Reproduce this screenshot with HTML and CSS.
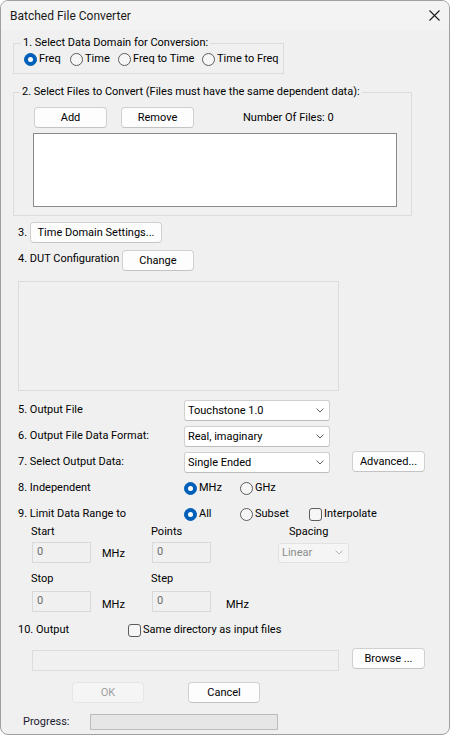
FILE: index.html
```html
<!DOCTYPE html>
<html>
<head>
<meta charset="utf-8">
<link rel="stylesheet" href="styles.css">
</head>
<body>
<div class="window">
  <div class="titlebar">
    <span class="title">Batched File Converter</span>
    <svg class="close" width="11" height="11" viewBox="0 0 11 11"><path d="M0.5 0.5 L10.5 10.5 M10.5 0.5 L0.5 10.5" stroke="#1a1a1a" stroke-width="1.1" fill="none"/></svg>
  </div>
  <div class="body">
    <fieldset class="group g1">
      <legend>1. Select Data Domain for Conversion:</legend>
      <div class="radios">
        <div class="opt o-freq"><span class="radio on"></span>Freq</div>
        <div class="opt o-time"><span class="radio"></span>Time</div>
        <div class="opt o-ftt"><span class="radio"></span>Freq to Time</div>
        <div class="opt"><span class="radio"></span>Time to Freq</div>
      </div>
    </fieldset>

    <fieldset class="group g2">
      <legend>2. Select Files to Convert (Files must have the same dependent data):</legend>
      <div class="filebar">
        <div class="btn">Add</div>
        <div class="btn btn-remove">Remove</div>
        <span class="count">Number Of Files: 0</span>
      </div>
      <div class="listbox"></div>
    </fieldset>

    <div class="row r3">
      <span class="num">3.</span>
      <div class="btn btn-tds">Time Domain Settings...</div>
    </div>

    <div class="row r4">
      <span class="dut-lbl">4. DUT Configuration</span>
      <div class="btn btn-change">Change</div>
    </div>

    <div class="dutbox"></div>

    <div class="row crow r5">
      <span class="lbl">5. Output File</span>
      <div class="combo"><span>Touchstone 1.0</span><svg class="chev" width="8" height="5" viewBox="0 0 8 5"><path d="M0.5 0.5 L4 4 L7.5 0.5" stroke="#606060" fill="none"/></svg></div>
    </div>
    <div class="row crow r6">
      <span class="lbl">6. Output File Data Format:</span>
      <div class="combo"><span>Real, imaginary</span><svg class="chev" width="8" height="5" viewBox="0 0 8 5"><path d="M0.5 0.5 L4 4 L7.5 0.5" stroke="#606060" fill="none"/></svg></div>
    </div>
    <div class="row crow r7">
      <span class="lbl">7. Select Output Data:</span>
      <div class="combo"><span>Single Ended</span><svg class="chev" width="8" height="5" viewBox="0 0 8 5"><path d="M0.5 0.5 L4 4 L7.5 0.5" stroke="#606060" fill="none"/></svg></div>
      <div class="btn btn-adv">Advanced...</div>
    </div>

    <div class="row r8">
      <span class="lbl">8. Independent</span>
      <div class="opt o-mhz"><span class="radio on"></span>MHz</div>
      <div class="opt"><span class="radio"></span>GHz</div>
    </div>

    <div class="row r9">
      <span class="lbl">9. Limit Data Range to</span>
      <div class="opt o-mhz"><span class="radio on"></span>All</div>
      <div class="opt o-subset"><span class="radio"></span>Subset</div>
      <div class="opt"><span class="check"></span>Interpolate</div>
    </div>

    <div class="sub r10">
      <span class="c-start">Start</span>
      <span class="c-points">Points</span>
      <span>Spacing</span>
    </div>
    <div class="sub inputs r11">
      <div class="field">0</div>
      <span class="unit u1">MHz</span>
      <div class="field">0</div>
      <div class="combo dis"><span>Linear</span><svg class="chev" width="8" height="5" viewBox="0 0 8 5"><path d="M0.5 0.5 L4 4 L7.5 0.5" stroke="#b5b5b5" fill="none"/></svg></div>
    </div>
    <div class="sub r12">
      <span class="c-start">Stop</span>
      <span>Step</span>
    </div>
    <div class="sub inputs r13">
      <div class="field">0</div>
      <span class="unit low">MHz</span>
      <div class="field">0</div>
      <span class="unit low u2">MHz</span>
    </div>

    <div class="row r14">
      <span class="out-lbl">10. Output</span>
      <div class="opt"><span class="check"></span>Same directory as input files</div>
    </div>

    <div class="row r15">
      <div class="pathbox"></div>
      <div class="btn btn-browse">Browse ...</div>
    </div>

    <div class="row r16">
      <div class="btn btn-ok">OK</div>
      <div class="btn btn-cancel">Cancel</div>
    </div>

    <div class="row r17">
      <span class="prog-lbl">Progress:</span>
      <div class="progress"></div>
    </div>
  </div>
</div>
</body>
</html>
```
FILE: styles.css
```css
* { box-sizing: border-box; }
html, body { margin: 0; padding: 0; background: #ffffff; }
body {
  font-family: Roboto, "Liberation Sans", sans-serif;
  font-size: 11px;
  line-height: 16px;
  color: #000;
}
.window {
  width: 450px;
  height: 735px;
  border: 1px solid #a0a0a0;
  border-radius: 8px;
  background: #f0f0f0;
  overflow: hidden;
}
.titlebar {
  height: 29px;
  background: #f3f3f3;
  display: flex;
  align-items: center;
  justify-content: space-between;
  padding: 0 9px 0 9px;
}
.title { color: #1a1a1a; font-size: 12px; }
.close { display: block; }
.body { display: flow-root; }

fieldset.group {
  margin: 0 0 0 12px;
  padding: 0 0 0 6px;
  border: 1px solid #dcdcdc;
  min-width: 0;
}
fieldset.group legend { padding: 0 2px; line-height: 16px; }
fieldset.g1 { width: 271px; margin-top: 5px; padding-bottom: 6px; }
fieldset.g1 legend { margin-left: 1px; }
fieldset.g2 { width: 399px; margin-top: 10px; padding-bottom: 8px; }

.radios { display: flex; align-items: center; height: 16px; margin-left: 4px; }
.opt { display: flex; align-items: center; white-space: nowrap; }
.o-freq { width: 46px; }
.o-time { width: 48px; }
.o-ftt { width: 84px; }
.o-mhz { width: 56px; }
.o-subset { width: 69px; }

.radio {
  flex: none;
  width: 13px; height: 13px;
  border-radius: 50%;
  border: 1px solid #5c5c5c;
  background: #f6f6f6;
  margin-right: 2px;
  display: flex; align-items: center; justify-content: center;
}
.radio.on { background: #005fb8; border-color: #005fb8; }
.radio.on::after {
  content: "";
  width: 5px; height: 5px;
  border-radius: 50%;
  background: #fff;
}
.check {
  flex: none;
  width: 13px; height: 13px;
  border: 1px solid #5c5c5c;
  border-radius: 3px;
  background: #f6f6f6;
  margin-right: 2px;
}

.btn {
  flex: none;
  height: 21px;
  width: 73px;
  background: #fdfdfd;
  border: 1px solid #d0d0d0;
  border-bottom-color: #c4c4c4;
  border-radius: 4px;
  display: flex; align-items: center; justify-content: center;
  white-space: nowrap;
}
.filebar { display: flex; align-items: center; height: 21px; margin: 7px 0 0 14px; }
.btn-remove { margin-left: 14px; }
.count { margin-left: 49px; }
.listbox {
  margin: 5px 0 0 13px;
  width: 364px; height: 74px;
  background: #fff;
  border: 1px solid #8a8a8a;
}

.row { display: flex; align-items: center; margin-left: 17px; }
.r3 { margin-top: 6px; height: 21px; }
.num { width: 12px; }
.btn-tds { width: 132px; }
.r4 { margin-top: 7px; height: 21px; align-items: flex-start; }
.dut-lbl { width: 104px; margin-top: 1px; white-space: nowrap; }
.btn-change { width: 72px; }
.dutbox {
  margin: 10px 0 0 17px;
  width: 321px; height: 110px;
  border: 1px solid #dcdcdc;
}

.crow { height: 21px; align-items: flex-start; }
.crow .lbl { margin-top: 2px; }
.r5 { margin-top: 9px; }
.r6 { margin-top: 5px; }
.r7 { margin-top: 5px; }
.lbl { width: 166px; flex: none; }
.combo {
  flex: none;
  width: 146px; height: 21px;
  background: #fff;
  border: 1px solid #d0d0d0;
  border-bottom-color: #bdbdbd;
  border-radius: 3px;
  display: flex; align-items: center; justify-content: space-between;
  padding: 0 5px 0 3px;
}
.chev { display: block; }
.btn-adv { margin: -1px 0 0 22px; }

.r8 { margin-top: 7px; height: 16px; }
.r9 { margin-top: 10px; height: 16px; }

.sub { display: flex; align-items: center; margin-left: 30px; height: 16px; }
.c-start { width: 120px; }
.c-points { width: 138px; }
.r10 { margin-top: 2px; }
.inputs { height: 21px; margin-left: 31px; }
.r11 { margin-top: 2px; }
.r12 { margin-top: 8px; }
.r13 { margin-top: 4px; }
.field {
  flex: none;
  width: 59px; height: 21px;
  border: 1px solid #d9d9d9;
  background: #f0f0f0;
  color: #6d6d6d;
  padding: 1px 0 0 4px;
}
.unit { width: 50px; margin-left: 11px; }
.u1 { margin-top: 2px; }
.low { margin-top: 6px; }
.u2 { margin-left: 15px; }
.combo.dis {
  width: 71px; height: 20px;
  margin-left: 67px;
  background: #f5f5f5;
  border-color: #e2e2e2;
  color: #8c8c8c;
}

.r14 { margin-top: 10px; height: 16px; }
.out-lbl { width: 110px; }
.r15 { margin-top: 10px; height: 23px; align-items: flex-start; }
.pathbox {
  flex: none;
  margin: 2px 0 0 14px;
  width: 307px; height: 21px;
  border: 1px solid #dcdcdc;
  background: #f0f0f0;
}
.btn-browse { margin-left: 13px; }
.r16 { margin-top: 11px; height: 21px; }
.btn-ok {
  width: 72px;
  margin-left: 54px;
  background: #f5f5f5;
  border-color: #e5e5e5;
  color: #a0a0a0;
}
.btn-cancel { width: 72px; margin-left: 44px; }
.r17 { margin-top: 11px; height: 16px; margin-left: 22px; }
.prog-lbl { width: 67px; color: #1a1a2e; }
.progress {
  width: 188px; height: 16px;
  background: #e6e6e6;
  border: 1px solid #bcbcbc;
}
```
